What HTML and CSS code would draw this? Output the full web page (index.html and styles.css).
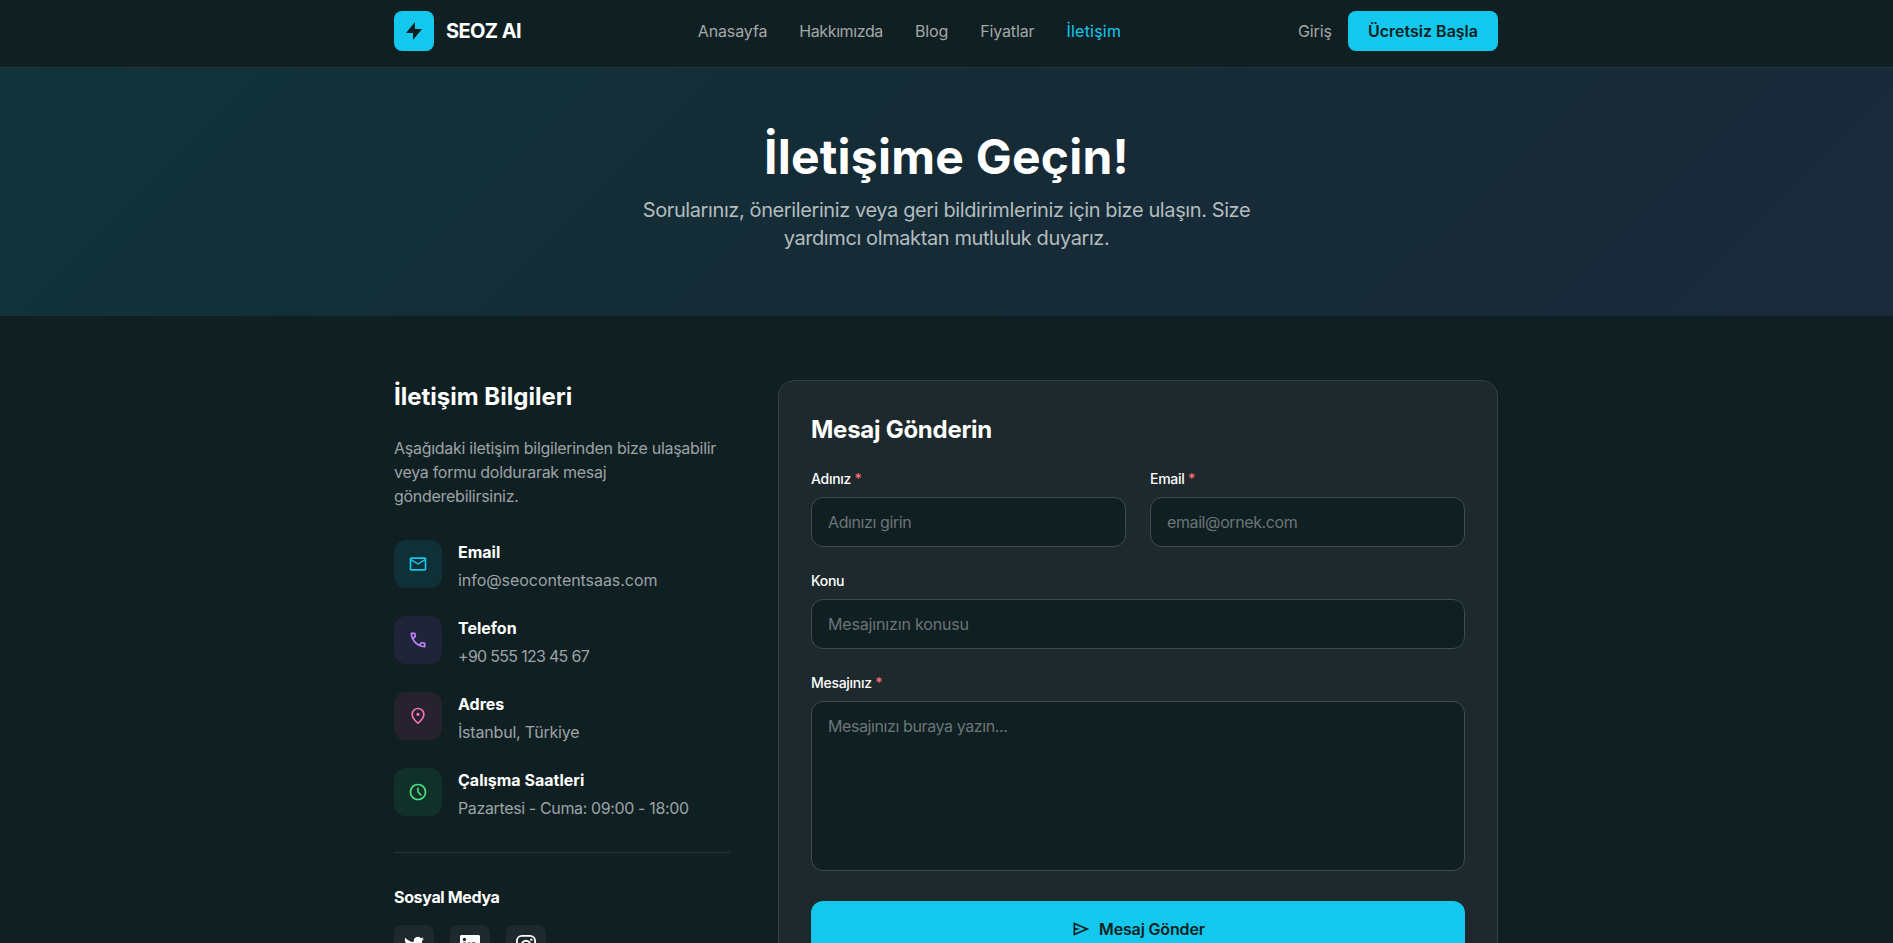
FILE: index.html
```
<!DOCTYPE html>
<html lang="tr">
<head>
  <meta charset="UTF-8" />
  <meta name="viewport" content="width=device-width, initial-scale=1.0"/>
  <title>İletişim - SEOZ AI</title>
  <link rel="stylesheet" href="styles.css">
</head>
<body>
  <header class="header">
    <div class="container header-inner">
      <a href="#" class="brand">
        <span class="brand-logo">
          <svg viewBox="0 0 24 24" fill="currentColor"><path d="M13 10V3L4 14h7v7l9-11h-7z"/></svg>
        </span>
        <span class="brand-name">SEOZ AI</span>
      </a>
      <nav class="nav">
        <a href="#">Anasayfa</a>
        <a href="#" class="about">Hakkımızda</a>
        <a href="#">Blog</a>
        <a href="#">Fiyatlar</a>
        <a href="#" class="active">İletişim</a>
      </nav>
      <div class="header-actions">
        <a href="#" class="login-link">Giriş</a>
        <a href="#" class="btn-start">Ücretsiz Başla</a>
      </div>
    </div>
  </header>

  <section class="hero">
    <h1>İletişime Geçin!</h1>
    <p>Sorularınız, önerileriniz veya geri bildirimleriniz için bize ulaşın. Size yardımcı olmaktan mutluluk duyarız.</p>
  </section>

  <main class="container content">
    <aside class="info">
      <h2>İletişim Bilgileri</h2>
      <p class="info-text">Aşağıdaki iletişim bilgilerinden bize ulaşabilir veya formu doldurarak mesaj gönderebilirsiniz.</p>

      <ul class="info-list">
        <li>
          <span class="info-icon mail">
            <svg viewBox="0 0 24 24" fill="currentColor"><path d="M4 20q-.825 0-1.412-.587T2 18V6q0-.825.588-1.412T4 4h16q.825 0 1.413.588T22 6v12q0 .825-.587 1.413T20 20zm8-7L4 8v10h16V8zm0-2 8-5H4zM4 8V6v12z"/></svg>
          </span>
          <div>
            <h3>Email</h3>
            <p>info@seocontentsaas.com</p>
          </div>
        </li>
        <li>
          <span class="info-icon phone">
            <svg viewBox="0 0 24 24" fill="currentColor"><path d="M19.95 21q-3.125 0-6.175-1.362t-5.55-3.863-3.862-5.55T3 4.05q0-.45.3-.75t.75-.3H8.1q.35 0 .625.238t.325.562l.65 3.5q.05.4-.025.675T9.4 8.45L6.975 10.9q.5.925 1.187 1.787t1.513 1.663q.775.775 1.625 1.438T13.1 17l2.35-2.35q.225-.225.588-.337t.712-.063l3.45.7q.35.1.575.363T21 15.9v4.05q0 .45-.3.75t-.75.3M6.025 9l1.65-1.65L7.25 5H5.025q.125 1.025.35 2.025T6.025 9m8.95 8.95q.975.425 1.988.675T19 18.95v-2.2l-2.35-.475z"/></svg>
          </span>
          <div>
            <h3>Telefon</h3>
            <p class="phone-number">+90 555 123 45 67</p>
          </div>
        </li>
        <li>
          <span class="info-icon address">
            <svg viewBox="0 0 24 24" fill="currentColor"><path d="M12 12q.825 0 1.413-.587T14 10t-.587-1.412T12 8t-1.412.588T10 10t.588 1.413T12 12m0 7.35q3.05-2.8 4.525-5.087T18 10.2q0-2.725-1.737-4.462T12 4 7.738 5.738 6 10.2q0 1.775 1.475 4.063T12 19.35M12 22q-4.025-3.425-6.012-6.362T4 10.2q0-3.75 2.413-5.975T12 2t5.588 2.225T20 10.2q0 2.5-1.987 5.438T12 22"/></svg>
          </span>
          <div>
            <h3>Adres</h3>
            <p class="address-text">İstanbul, Türkiye</p>
          </div>
        </li>
        <li>
          <span class="info-icon hours">
            <svg viewBox="0 0 24 24" fill="currentColor"><path d="m15.3 16.7 1.4-1.4-3.7-3.7V7h-2v5.4zM12 22q-2.075 0-3.9-.787t-3.175-2.138T2.788 15.9 2 12t.788-3.9 2.137-3.175T8.1 2.788 12 2t3.9.788 3.175 2.137T21.213 8.1 22 12t-.788 3.9-2.137 3.175-3.175 2.138T12 22m0-2q3.325 0 5.663-2.337T20 12t-2.337-5.663T12 4 6.337 6.337 4 12t2.337 5.663T12 20"/></svg>
          </span>
          <div>
            <h3>Çalışma Saatleri</h3>
            <p class="hours-text">Pazartesi - Cuma: 09:00 - 18:00</p>
          </div>
        </li>
      </ul>

      <div class="social">
        <h3>Sosyal Medya</h3>
        <div class="social-links">
          <a href="#" aria-label="Twitter">
            <svg viewBox="0 0 24 24" fill="currentColor"><path d="M23.953 4.57a10 10 0 01-2.825.775 4.958 4.958 0 002.163-2.723c-.951.555-2.005.959-3.127 1.184a4.92 4.92 0 00-8.384 4.482C7.69 8.095 4.067 6.13 1.64 3.162a4.822 4.822 0 00-.666 2.475c0 1.71.87 3.213 2.188 4.096a4.904 4.904 0 01-2.228-.616v.06a4.923 4.923 0 003.946 4.827 4.996 4.996 0 01-2.212.085 4.936 4.936 0 004.604 3.417 9.867 9.867 0 01-6.102 2.105c-.39 0-.779-.023-1.17-.067a13.995 13.995 0 007.557 2.209c9.053 0 13.998-7.496 13.998-13.985 0-.21 0-.42-.015-.63A9.935 9.935 0 0024 4.59z"/></svg>
          </a>
          <a href="#" aria-label="LinkedIn">
            <svg viewBox="0 0 24 24" fill="currentColor"><path d="M20.447 20.452h-3.554v-5.569c0-1.328-.027-3.037-1.852-3.037-1.853 0-2.136 1.445-2.136 2.939v5.667H9.351V9h3.414v1.561h.046c.477-.9 1.637-1.85 3.37-1.85 3.601 0 4.267 2.37 4.267 5.455v6.286zM5.337 7.433a2.062 2.062 0 01-2.063-2.065 2.064 2.064 0 112.063 2.065zm1.782 13.019H3.555V9h3.564v11.452zM22.225 0H1.771C.792 0 0 .774 0 1.729v20.542C0 23.227.792 24 1.771 24h20.451C23.2 24 24 23.227 24 22.271V1.729C24 .774 23.2 0 22.222 0h.003z"/></svg>
          </a>
          <a href="#" aria-label="Instagram">
            <svg viewBox="0 0 24 24" fill="none" stroke="currentColor" stroke-width="2.2"><rect x="1.1" y="1.1" width="21.8" height="21.8" rx="6"/><circle cx="12" cy="12" r="5.1"/><circle cx="18.4" cy="5.6" r="1.44" fill="currentColor" stroke="none"/></svg>
          </a>
        </div>
      </div>
    </aside>

    <section class="form-card">
      <h2>Mesaj Gönderin</h2>
      <form>
        <div class="form-row">
          <div class="form-group">
            <label for="name">Adınız <span>*</span></label>
            <input type="text" id="name" placeholder="Adınızı girin" required />
          </div>
          <div class="form-group">
            <label for="email">Email <span>*</span></label>
            <input type="email" id="email" placeholder="email@ornek.com" required />
          </div>
        </div>
        <div class="form-group">
          <label for="subject">Konu</label>
          <input type="text" id="subject" placeholder="Mesajınızın konusu" />
        </div>
        <div class="form-group">
          <label for="message">Mesajınız <span>*</span></label>
          <textarea id="message" rows="6" placeholder="Mesajınızı buraya yazın..." required></textarea>
        </div>
        <button type="submit" class="btn-send">
          <svg viewBox="0 0 24 24" fill="currentColor"><path d="M3 20V4l19 8zm2-3 11.85-5L5 7v3.5l6 1.5-6 1.5zm0 0V7z"/></svg>
          Mesaj Gönder
        </button>
      </form>
    </section>
  </main>
</body>
</html>
```
FILE: styles.css
```
* {
  margin: 0;
  padding: 0;
  box-sizing: border-box;
}

html, body {
  height: 100%;
}

body {
  font-family: Inter, sans-serif;
  font-size: 16px;
  line-height: 24px;
  background-color: #101f22;
  color: #fff;
  overflow: hidden;
}

a {
  color: inherit;
  text-decoration: none;
}

ul {
  list-style: none;
}

.container {
  max-width: 1153px;
  margin: 0 auto;
  padding: 0 25px 0 24px;
}

.header {
  border-bottom: 1px solid #26353a;
}

.header-inner {
  display: flex;
  justify-content: space-between;
  align-items: center;
  padding-top: 11px;
  padding-bottom: 16px;
}

.brand {
  display: flex;
  align-items: center;
  gap: 12px;
}

.brand-logo {
  display: flex;
  align-items: center;
  justify-content: center;
  width: 40px;
  height: 40px;
  border-radius: 8px;
  background-color: #13c8ec;
  color: #101f22;
}

.brand-logo svg {
  width: 24px;
  height: 24px;
}

.brand-name {
  font-size: 20px;
  font-weight: 700;
  letter-spacing: -0.03em;
}

.nav {
  display: flex;
  gap: 32px;
  color: #a3a8a9;
  letter-spacing: -0.008em;
}

.nav .about {
  letter-spacing: -0.025em;
}

.nav .active {
  color: #13c8ec;
  letter-spacing: 0.014em;
}

.header-actions {
  display: flex;
  align-items: center;
  gap: 16px;
}

.login-link {
  color: #a3a8a9;
  letter-spacing: -0.005em;
}

.btn-start {
  padding: 8px 20px;
  border-radius: 8px;
  background-color: #13c8ec;
  color: #101f22;
  font-weight: 600;
}

.hero {
  padding: 64px 24px;
  text-align: center;
  background: linear-gradient(135deg, #10343a, #152b36 50%, #1a2a3b);
}

.hero h1 {
  padding-top: 1px;
  font-size: 48px;
  line-height: 48px;
  font-weight: 700;
  letter-spacing: 0.005em;
  margin-bottom: 15px;
}

.hero p {
  max-width: 672px;
  margin: 0 auto;
  font-size: 20px;
  line-height: 28px;
  letter-spacing: -0.02em;
  color: #b4bcbf;
}

.content {
  display: grid;
  grid-template-columns: 336px 1fr;
  gap: 48px;
  padding-top: 64px;
  padding-bottom: 64px;
}

h2 {
  padding-top: 1px;
  font-size: 24px;
  line-height: 32px;
  font-weight: 700;
  margin-bottom: 23px;
}

h3 {
  font-size: 16px;
  font-weight: 700;
}

.info-text {
  max-width: 330px;
  color: #9ca3a6;
  letter-spacing: -0.0175em;
  margin-bottom: 32px;
}

.info-list {
  display: flex;
  flex-direction: column;
  gap: 24px;
}

.info-list li {
  display: flex;
  gap: 16px;
}

.info-list h3 {
  margin-bottom: 4px;
}

.info-list p {
  color: #9ca3a6;
  letter-spacing: -0.003em;
}

.info-list .phone-number {
  letter-spacing: -0.044em;
}

.info-list .address-text {
  letter-spacing: -0.012em;
}

.info-list .hours-text {
  letter-spacing: -0.023em;
}

.info-icon {
  display: flex;
  align-items: center;
  justify-content: center;
  width: 48px;
  height: 48px;
  border-radius: 12px;
}

.info-icon svg,
.social-links svg,
.btn-send svg {
  width: 20px;
  height: 20px;
}

.mail {
  background-color: #103037;
  color: #13c8ec;
}

.phone {
  background-color: #1f2438;
  color: #c084fc;
}

.address {
  background-color: #27232e;
  color: #f472b6;
}

.hours {
  background-color: #12302a;
  color: #4ade80;
}

.social {
  margin-top: 32px;
  padding-top: 32px;
  border-top: 1px solid #28363a;
}

.social h3 {
  letter-spacing: -0.021em;
  margin-bottom: 16px;
}

.social-links {
  display: flex;
  gap: 16px;
}

.social-links a {
  display: flex;
  align-items: center;
  justify-content: center;
  width: 40px;
  height: 40px;
  border-radius: 8px;
  background-color: #1e292d;
}

.form-card {
  padding: 32px;
  border: 1px solid #354043;
  border-radius: 16px;
  background-color: #1e292d;
}

.form-card h2 {
  letter-spacing: -0.011em;
}

.form-row {
  display: grid;
  grid-template-columns: 1fr 1fr;
  gap: 24px;
}

.form-group {
  margin-bottom: 24px;
}

label {
  display: block;
  margin-bottom: 8px;
  font-size: 14px;
  line-height: 20px;
  font-weight: 500;
  letter-spacing: -0.02em;
}

label span {
  color: #f87171;
}

input,
textarea {
  width: 100%;
  padding: 12px 16px;
  border: 1px solid #414b4c;
  border-radius: 12px;
  background-color: #101f22;
  color: #fff;
  font: inherit;
  letter-spacing: -0.025em;
  resize: none;
}

input {
  display: block;
}

#subject {
  letter-spacing: -0.01em;
}

::placeholder {
  color: #6b7577;
}

.btn-send {
  display: flex;
  align-items: center;
  justify-content: center;
  gap: 8px;
  width: 100%;
  padding: 16px;
  border: none;
  border-radius: 12px;
  background-color: #13c8ec;
  color: #101f22;
  font: inherit;
  font-weight: 600;
  letter-spacing: -0.01em;
  cursor: pointer;
}
```
